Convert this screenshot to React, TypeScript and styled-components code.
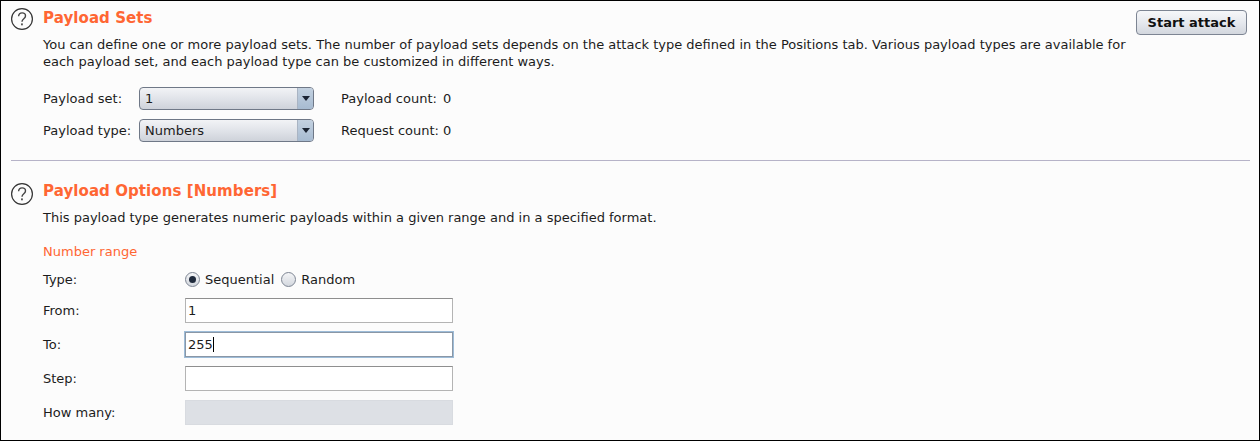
import React from 'react';
import styled, { createGlobalStyle } from 'styled-components';

const GlobalStyle = createGlobalStyle`
  html, body {
    margin: 0;
    padding: 0;
    background: #fcfcfc;
  }
  body {
    font-family: "DejaVu Sans", sans-serif;
    font-size: 13px;
    color: #1c1c1c;
  }
`;

const Frame = styled.div`
  box-sizing: border-box;
  width: 1260px;
  height: 441px;
  border: 1px solid #000;
  background: #fcfcfc;
  padding: 0 9px 0 10px;
  overflow: hidden;
`;

const Section = styled.section`
  display: grid;
  grid-template-columns: 32px 1fr;
`;

const HelpCell = styled.div<{ $top: number }>`
  padding-top: ${(p) => p.$top}px;
`;

const Body = styled.div`
  min-width: 0;
`;

const TitleRow = styled.div`
  display: flex;
  justify-content: space-between;
  align-items: flex-start;
`;

const Title = styled.h2<{ $top?: number }>`
  margin: ${(p) => p.$top ?? 0}px 0 0;
  font-size: 15px;
  line-height: 18px;
  font-weight: bold;
  letter-spacing: 0.08px;
  color: #ff6633;
`;

const Description = styled.p<{ $top: number }>`
  margin: ${(p) => p.$top}px 0 0;
  max-width: 1090px;
  line-height: 17px;
`;

const StartButton = styled.button`
  box-sizing: border-box;
  width: 111px;
  height: 25px;
  margin: 9px 3px 0 0;
  padding: 0;
  border: 1px solid #7d8593;
  border-radius: 4px;
  background: linear-gradient(#f6f7f9, #e6e9ee 50%, #d3d7de);
  font-family: inherit;
  font-size: 13px;
  font-weight: bold;
  color: #111;
`;

const ComboGrid = styled.div`
  display: grid;
  grid-template-columns: 96px 175px 27px auto;
  grid-auto-rows: 23px;
  row-gap: 9px;
  margin-top: 17px;
  align-items: center;
`;

const Label = styled.span`
  white-space: nowrap;
`;

const Combo = styled.div`
  box-sizing: border-box;
  height: 23px;
  display: flex;
  align-items: stretch;
  border: 1px solid #6f7887;
  border-radius: 4px;
  overflow: hidden;
  background: linear-gradient(#f2f3f6, #dfe2e8 55%, #ced2da);
`;

const ComboValue = styled.span`
  flex: 1;
  padding-left: 5px;
  line-height: 21px;
`;

const ComboArrow = styled.span`
  width: 15px;
  display: flex;
  align-items: center;
  justify-content: center;
  border-left: 1px solid #a9b4c3;
  background: linear-gradient(#c3d1e0, #a7bbd1);
`;

const CountCell = styled.span`
  display: grid;
  grid-template-columns: 102px auto;
`;

const Divider = styled.hr`
  margin: 18px 0 0 0;
  border: 0;
  border-top: 1px solid #b6b3c8;
  height: 0;
`;

const SecondSection = styled(Section)`
  margin-top: 21px;
`;

const SubHeading = styled.h3`
  margin: 17px 0 0;
  font-size: 13px;
  line-height: 17px;
  font-weight: normal;
  color: #ff6633;
`;

const FormGrid = styled.div`
  display: grid;
  grid-template-columns: 142px 268px;
  grid-template-rows: 20px repeat(4, 25px);
  row-gap: 9px;
  margin-top: 9px;
  align-items: center;
`;

const RadioGroup = styled.div`
  display: flex;
  align-items: center;
`;

const RadioItem = styled.label`
  display: flex;
  align-items: center;
  gap: 5px;
  margin-right: 7px;
`;

const RadioDot = styled.span<{ $checked?: boolean }>`
  box-sizing: border-box;
  width: 15px;
  height: 15px;
  border-radius: 50%;
  border: 1px solid #7d8593;
  background: linear-gradient(#f4f5f7, #d3d7de);
  display: flex;
  align-items: center;
  justify-content: center;
  &::after {
    content: '';
    display: ${(p) => (p.$checked ? 'block' : 'none')};
    width: 7px;
    height: 7px;
    border-radius: 50%;
    background: #1f2a3c;
  }
`;

const Field = styled.div<{ $focused?: boolean; $disabled?: boolean }>`
  box-sizing: border-box;
  height: 25px;
  padding-left: 2px;
  line-height: 23px;
  border: 1px solid ${(p) => (p.$disabled ? '#d8dbe0' : '#b4b4b4')};
  border-top-color: ${(p) => (p.$disabled ? '#d8dbe0' : '#8e8e8e')};
  background: ${(p) => (p.$disabled ? '#dde0e5' : '#fff')};
  ${(p) =>
    p.$focused &&
    `
    border-color: #8a97a6;
    outline: 1px solid #9dbcd8;
  `}
`;

const Caret = styled.span`
  display: inline-block;
  width: 1px;
  height: 15px;
  background: #000;
  vertical-align: -3px;
`;

const HelpIcon = () => (
  <svg width="22" height="22" viewBox="0 0 22 22" fill="none">
    <circle cx="11" cy="11" r="10.4" stroke="#333" strokeWidth="1.2" />
    <path d="M7.6 8.2c.2-2.2 1.7-3.3 3.5-3.3 2 0 3.4 1.2 3.4 3 0 2.8-3.5 2.8-3.5 5.8" stroke="#444" strokeWidth="1.4" />
    <rect x="10.1" y="15.4" width="1.7" height="1.9" fill="#444" />
  </svg>
);

const ArrowIcon = () => (
  <svg width="8" height="5" viewBox="0 0 8 5">
    <path d="M0 0h8L4 5z" fill="#1b2433" />
  </svg>
);

const App: React.FC = () => (
  <Frame>
    <GlobalStyle />
    <Section>
      <HelpCell $top={7}>
        <HelpIcon />
      </HelpCell>
      <Body>
        <TitleRow>
          <Title $top={8}>Payload Sets</Title>
          <StartButton>Start attack</StartButton>
        </TitleRow>
        <Description $top={1}>
          You can define one or more payload sets. The number of payload sets depends on the attack type defined in the Positions tab. Various payload types are available for each payload set, and each payload type can be customized in different ways.
        </Description>
        <ComboGrid>
          <Label>Payload set:</Label>
          <Combo>
            <ComboValue>1</ComboValue>
            <ComboArrow>
              <ArrowIcon />
            </ComboArrow>
          </Combo>
          <span />
          <CountCell>
            <Label>Payload count:</Label>
            <span>0</span>
          </CountCell>
          <Label>Payload type:</Label>
          <Combo>
            <ComboValue>Numbers</ComboValue>
            <ComboArrow>
              <ArrowIcon />
            </ComboArrow>
          </Combo>
          <span />
          <CountCell>
            <Label>Request count:</Label>
            <span>0</span>
          </CountCell>
        </ComboGrid>
      </Body>
    </Section>
    <Divider />
    <SecondSection>
      <HelpCell $top={1}>
        <HelpIcon />
      </HelpCell>
      <Body>
        <Title>Payload Options [Numbers]</Title>
        <Description $top={9}>
          This payload type generates numeric payloads within a given range and in a specified format.
        </Description>
        <SubHeading>Number range</SubHeading>
        <FormGrid>
          <Label>Type:</Label>
          <RadioGroup>
            <RadioItem>
              <RadioDot $checked />
              Sequential
            </RadioItem>
            <RadioItem>
              <RadioDot />
              Random
            </RadioItem>
          </RadioGroup>
          <Label>From:</Label>
          <Field>1</Field>
          <Label>To:</Label>
          <Field $focused>
            255
            <Caret />
          </Field>
          <Label>Step:</Label>
          <Field />
          <Label>How many:</Label>
          <Field $disabled />
        </FormGrid>
      </Body>
    </SecondSection>
  </Frame>
);

export default App;
